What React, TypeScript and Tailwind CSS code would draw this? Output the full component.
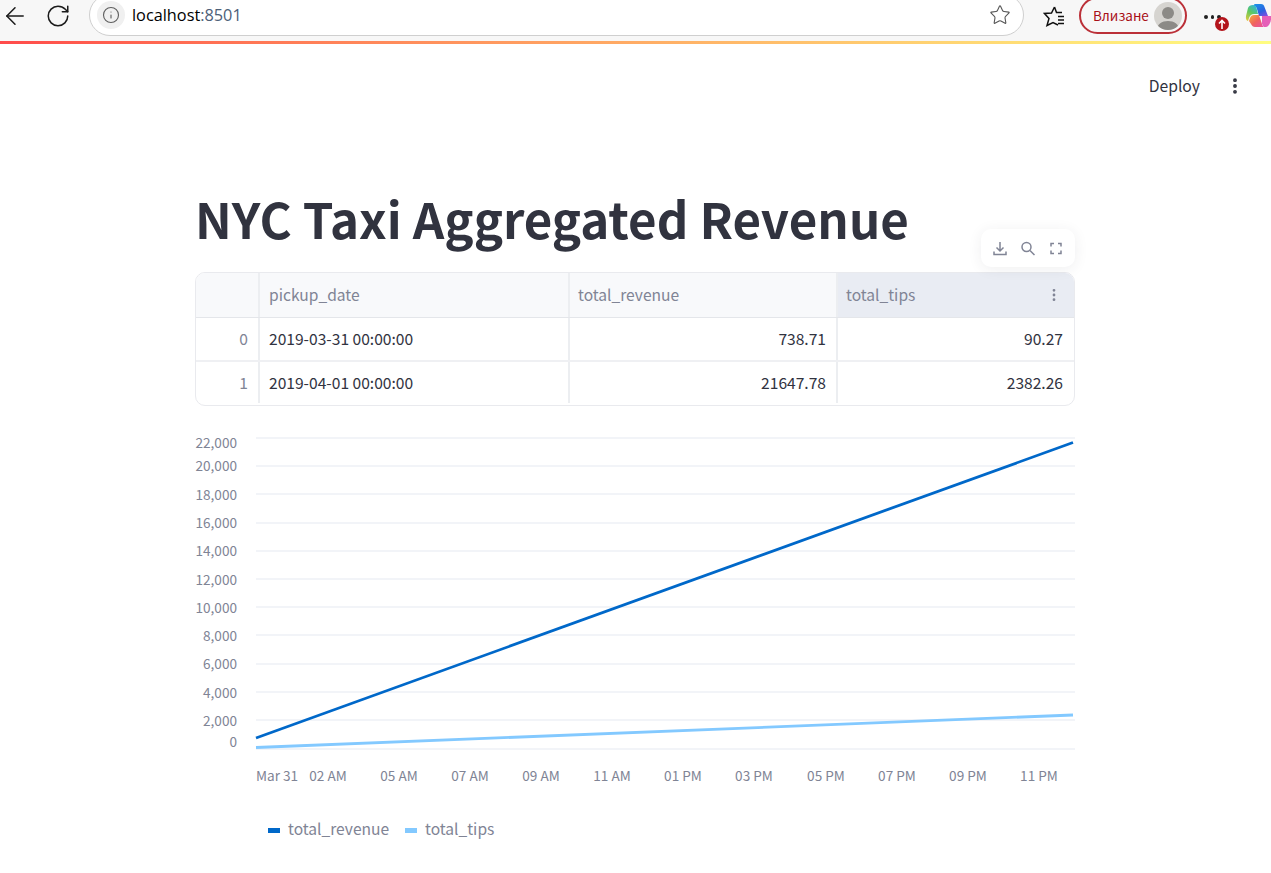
import { ArrowLeft, Info, MoreVertical, RotateCw, Star } from "lucide-react";

const font = "font-['Noto_Sans_CJK_JP','Source_Sans_Pro',sans-serif]";

const gridLines = [438, 466, 494, 523, 551, 579, 607, 635, 664, 692, 720, 749];

const yLabels = [
    { text: "22,000", y: 448 },
    { text: "20,000", y: 471 },
    { text: "18,000", y: 500 },
    { text: "16,000", y: 528 },
    { text: "14,000", y: 556 },
    { text: "12,000", y: 585 },
    { text: "10,000", y: 613 },
    { text: "8,000", y: 641 },
    { text: "6,000", y: 669 },
    { text: "4,000", y: 698 },
    { text: "2,000", y: 726 },
    { text: "0", y: 747 },
];

const xLabels = [
    { text: "02 AM", x: 328 },
    { text: "05 AM", x: 399 },
    { text: "07 AM", x: 470 },
    { text: "09 AM", x: 541 },
    { text: "11 AM", x: 612 },
    { text: "01 PM", x: 683 },
    { text: "03 PM", x: 754 },
    { text: "05 PM", x: 826 },
    { text: "07 PM", x: 897 },
    { text: "09 PM", x: 968 },
    { text: "11 PM", x: 1039 },
];

const rows = [
    { id: "0", date: "2019-03-31 00:00:00", revenue: "738.71", tips: "90.27" },
    { id: "1", date: "2019-04-01 00:00:00", revenue: "21647.78", tips: "2382.26" },
];

const CopilotLogo = () => (
    <svg className="ml-[24px] mt-[2px] shrink-0" width="27" height="27" viewBox="0 0 27 27">
        <defs>
            <linearGradient id="copilotA" x1="0.2" y1="0" x2="0.8" y2="1">
                <stop offset="0" stopColor="#1c8fe8" />
                <stop offset="0.6" stopColor="#2b62e0" />
                <stop offset="1" stopColor="#7b4fe0" />
            </linearGradient>
            <linearGradient id="copilotB" x1="0" y1="0" x2="1" y2="1">
                <stop offset="0" stopColor="#f5b13a" />
                <stop offset="0.5" stopColor="#f0645c" />
                <stop offset="1" stopColor="#e84fa8" />
            </linearGradient>
            <linearGradient id="copilotC" x1="0.8" y1="0" x2="0.2" y2="1">
                <stop offset="0" stopColor="#2fb4e0" />
                <stop offset="0.5" stopColor="#5cc860" />
                <stop offset="1" stopColor="#d8c93e" />
            </linearGradient>
        </defs>
        <path d="M10 2h6c2 0 3 1 3.500 3l3.500 9h-9l-2-7c-.5-2-1.500-3-3.500-3 .4-1.300 .8-2 1.500-2z" fill="url(#copilotA)" />
        <path d="M8 3c2 0 3 1 3.500 3l1.500 6H9c-2.500 0-4 1.500-5 4l-1 3c-1.500-.5-2.500-2-2-5l2-8c.7-2 2.500-3 5-3z" fill="url(#copilotC)" />
        <path d="M9 13h5l3 9c.5 1.500 1 2.500 2 3H10c-2 0-3-1-4-3l-2-3 1-3c.8-2 2-3 4-3z" fill="url(#copilotB)" />
        <path d="M17 14h9c.5 3-.5 7-2.500 9.500-1 1.200-2.500 1.700-4.500 1.500-1-1-1.500-2-2-3.500z" fill="#e55fb8" />
    </svg>
);

const BrowserBar = () => (
    <div className="flex h-[41px] items-start overflow-hidden bg-[#f7f7f7] font-['Open_Sans',sans-serif]">
        <div className="flex w-[89px] shrink-0 items-center pt-[2px] text-[#1b1b1b]">
            <ArrowLeft className="ml-[1px] h-[28px] w-[28px]" strokeWidth={1.3} />
            <RotateCw className="ml-[16px] h-[26px] w-[26px]" strokeWidth={1.4} />
        </div>
        <div className="-mt-[6px] flex h-[42px] w-[935px] shrink-0 items-center rounded-full border border-[#cfcfcf] bg-white pl-[7px] pr-[12px]">
            <div className="flex h-[28px] w-[28px] items-center justify-center rounded-full bg-[#f0f0f0] text-[#5f5f5f]">
                <Info className="h-[18px] w-[18px]" strokeWidth={1.5} />
            </div>
            <div className="ml-[7px] text-[16.3px] leading-none text-black">
                localhost<span className="text-[#4d6078]">:8501</span>
            </div>
            <Star className="ml-auto h-[22px] w-[22px] text-[#555555]" strokeWidth={1.2} />
        </div>
        <svg className="ml-[19px] mt-[5px] shrink-0" width="22" height="22" viewBox="0 0 22 22" fill="none" stroke="#111111" strokeWidth="1.5">
            <path d="M11.500 2L13.500 7.500H19M11.500 2L8.500 8L1.500 8.500L6 13.500L4 20.500L10 17.500L15 20" />
            <path d="M15 11.500h6M15 15h6M15 18.500h6" />
        </svg>
        <div className="-mt-[3px] ml-[14px] flex h-[37px] w-[108px] shrink-0 items-center rounded-full border-2 border-[#bb3038] pl-[12px] text-[13.5px] text-[#a80f17]">
            <span className={`${font} leading-none`}>Влизане</span>
            <div className="ml-[5px] flex h-[28px] w-[28px] items-end justify-center overflow-hidden rounded-full bg-[#d6d4d0]">
                <svg width="24" height="26" viewBox="0 0 24 26" fill="#8c8a86">
                    <circle cx="12" cy="9" r="6" />
                    <path d="M1 26c0-6 5-9 11-9s11 3 11 9z" />
                </svg>
            </div>
        </div>
        <div className="relative ml-[17px] mt-[15px] flex w-[17px] shrink-0 gap-[3px]">
            <span className="h-[4px] w-[4px] rounded-full bg-[#222222]" />
            <span className="h-[4px] w-[4px] rounded-full bg-[#222222]" />
            <span className="h-[4px] w-[4px] rounded-full bg-[#222222]" />
            <span className="absolute left-[11px] top-[2px] flex h-[14px] w-[14px] items-center justify-center rounded-full bg-[#b3141b]">
                <svg width="8" height="10" viewBox="0 0 8 10" fill="none" stroke="#ffffff" strokeWidth="1.6">
                    <path d="M4 10V2M1 4.500L4 1.500l3 3" />
                </svg>
            </span>
        </div>
        <CopilotLogo />
    </div>
);

const Toolbar = () => (
    <div className="absolute right-0 top-[-43px] flex h-[38px] w-[94px] items-center justify-center gap-[14px] rounded-[10px] bg-white shadow-[0_2px_14px_rgba(49,51,63,0.08)]">
        <svg width="14" height="15" viewBox="0 0 14 15" fill="none" stroke="#808495" strokeWidth="1.500">
            <path d="M7 1v8.500M3.500 6.500L7 10l3.500-3.500M1 10.500v3h12v-3" />
        </svg>
        <svg width="14" height="15" viewBox="0 0 14 15" fill="none" stroke="#808495" strokeWidth="1.500">
            <circle cx="5.500" cy="6" r="4.500" />
            <path d="M9 9.500L13.500 14" />
        </svg>
        <svg width="14" height="15" viewBox="0 0 14 15" fill="none" stroke="#808495" strokeWidth="1.500">
            <path d="M2 5.500v-3h3M9 2.500h3v3M12 9.500v3H9M5 12.500H2v-3" />
        </svg>
    </div>
);

const DataTable = () => (
    <div className="relative">
        <Toolbar />
        <div className="overflow-hidden rounded-[10px] border border-[#e9eaee] text-[15.6px]">
            <div className="grid h-[45px] grid-cols-[64px_310px_268px_1fr] border-b border-[#e4e6ea] bg-[#f8f9fb] text-[#808495]">
                <div className="border-r-2 border-[#eceef1]" />
                <div className="flex items-center border-r-2 border-[#eceef1] pl-[9px]">pickup_date</div>
                <div className="flex items-center border-r-2 border-[#eceef1] pl-[8px]">total_revenue</div>
                <div className="flex items-center justify-between bg-[#e9ecf3] pl-[8px] pr-[12px]">
                    total_tips
                    <MoreVertical className="h-[16px] w-[16px] text-[#808495]" strokeWidth={2.2} />
                </div>
            </div>
            {rows.map((row, i) => (
                <div key={row.id} className={`grid grid-cols-[64px_310px_268px_1fr] text-[#31333f] ${i === 0 ? "h-[44px] border-b-2 border-[#eff0f3]" : "h-[43px] pb-[2px]"}`}>
                    <div className="flex items-center justify-end border-r-2 border-[#eceef1] pr-[10px] text-[#808495]">{row.id}</div>
                    <div className="flex items-center border-r-2 border-[#eceef1] pl-[9px]">{row.date}</div>
                    <div className="flex items-center justify-end border-r-2 border-[#eceef1] pr-[10px]">{row.revenue}</div>
                    <div className="flex items-center justify-end pr-[11px]">{row.tips}</div>
                </div>
            ))}
        </div>
    </div>
);

// chart coordinates are page pixels, the viewBox offset keeps them readable
const LineChart = () => (
    <svg className="mt-[26px] block" width="880" height="414" viewBox="195 432 880 414">
        {gridLines.map(y => (
            <line key={y} x1="256" x2="1075" y1={y} y2={y} stroke="#e6eaf1" strokeWidth="1.1" />
        ))}
        {yLabels.map(l => (
            <text key={l.text} x="237" y={l.y} textAnchor="end" fontSize="13.6" fill="#808495">{l.text}</text>
        ))}
        <text x="256" y="781" fontSize="13.6" fill="#808495">Mar 31</text>
        {xLabels.map(l => (
            <text key={l.text} x={l.x} y="781" textAnchor="middle" fontSize="13.6" fill="#808495">{l.text}</text>
        ))}
        <line x1="256" y1="738" x2="1073" y2="442.500" stroke="#0068c9" strokeWidth="2.8" />
        <line x1="256" y1="747.500" x2="1073" y2="715" stroke="#83c9ff" strokeWidth="2.8" />
        <rect x="268" y="828" width="12" height="5" fill="#0068c9" />
        <text x="288" y="835" fontSize="15.6" fill="#808495">total_revenue</text>
        <rect x="405" y="828" width="12" height="5" fill="#83c9ff" />
        <text x="425" y="835" fontSize="15.6" fill="#808495">total_tips</text>
    </svg>
);

export default function App() {
    return (
        <div className={`${font} h-[873px] overflow-hidden bg-white`}>
            <BrowserBar />
            <div className="h-[3px] bg-gradient-to-r from-[#ff4b4b] to-[#fffd80]" />
            <div className="flex h-[84px] items-center justify-end pr-[26px] text-[#31333f]">
                <span className="text-[15.7px] leading-none">Deploy</span>
                <MoreVertical className="ml-[25px] h-[20px] w-[20px]" strokeWidth={2.6} />
            </div>
            <div className="ml-[195px] w-[880px]">
                <h1 className="mt-[55px] h-[89px] text-[49.2px] font-bold leading-[70px] text-[#31333f]">
                    NYC Taxi Aggregated Revenue
                </h1>
                <DataTable />
                <LineChart />
            </div>
        </div>
    );
}
